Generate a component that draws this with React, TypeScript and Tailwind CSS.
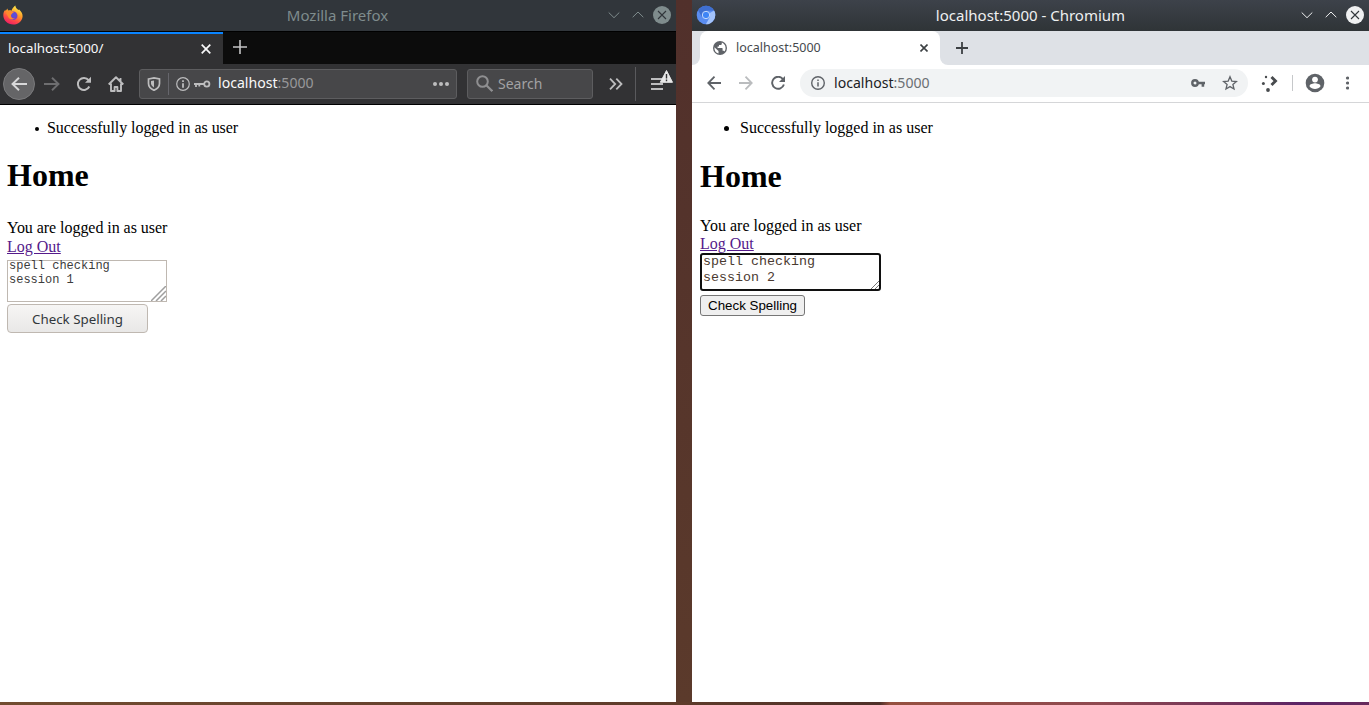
import React from "react";

type IconProps = { w: number; h: number; className?: string; children: React.ReactNode };

function Icon({ w, h, className = "", children }: IconProps) {
  return (
    <svg
      width={w}
      height={h}
      viewBox={`0 0 ${w} ${h}`}
      fill="none"
      stroke="currentColor"
      className={`block shrink-0 ${className}`}
    >
      {children}
    </svg>
  );
}

function FirefoxLogo() {
  return (
    <Icon w={20} h={20} className="-mt-[2px] ml-[3px]">
      <defs>
        <linearGradient id="fx" x1="0.75" y1="0.05" x2="0.3" y2="1">
          <stop offset="0" stopColor="#fff04a" />
          <stop offset="0.4" stopColor="#ff9a28" />
          <stop offset="0.7" stopColor="#ff4a45" />
          <stop offset="1" stopColor="#ed1a68" />
        </linearGradient>
      </defs>
      <path
        d="M4.4 3.6 5 5.6c1.4-.5 2.7-.3 3.5.1C9.200 3.500 10.800 1.500 12.300.5c.3 2.400 1.600 3.300 3 4.400l.8-.3c2 1.700 3.600 4.300 3.500 6.600-.2 4.700-4.400 8.400-9.400 8.400C4.700 19.600.3 15.400.3 10.300c0-2.400.8-4.300 2.100-5.500L2.600 6z"
        fill="url(#fx)"
        stroke="none"
      />
      <circle cx="10.200" cy="10.700" r="4.300" fill="#7542c8" stroke="none" />
      <path d="M3 8c2-2.200 4.300-2.200 6.300-1.500L11 7.800c-1 1.300-2.500 1-3 2.400-.2 2.200 1.500 3.700 4 3.100-1.800 2-6 1.200-7-1.800" fill="#ff8a2c" stroke="none" />
      <circle cx="11" cy="10.200" r="2.400" fill="#5b50d8" stroke="none" />
    </Icon>
  );
}

function ChromiumLogo() {
  return (
    <Icon w={20} h={20} className="-mt-px ml-1">
      <circle cx="10" cy="10" r="9.300" fill="#5a8df0" stroke="none" />
      <path d="M2 5.300A9.300 9.300 0 0 1 18.100 5.500L10 5.700 6 12z" fill="#3f6fd0" stroke="none" />
      <path d="M13 8.500 18.100 5.500A9.300 9.300 0 0 1 9.800 19.300l4-7z" fill="#a3c3fb" stroke="none" />
      <circle cx="10" cy="10" r="3.700" fill="#3f85f5" stroke="#c5dafc" strokeWidth="1" />
    </Icon>
  );
}

function WindowButtons({ disc, cross, line }: { disc: string; cross: string; line: string }) {
  return (
    <div className="-mt-px flex items-center gap-3">
      <Icon w={12} h={12} className={line}>
        <path d="m.7 3.500 5.300 5.200 5.300-5.200" />
      </Icon>
      <Icon w={12} h={12} className={line}>
        <path d="m.7 8.200 5.300-5.200 5.300 5.200" />
      </Icon>
      <Icon w={18} h={18} className="-ml-[3px]">
        <circle cx="9" cy="9" r="9" fill={disc} stroke="none" />
        <path d="m5 5 8 8M13 5l-8 8" stroke={cross} strokeWidth="1.100" />
      </Icon>
    </div>
  );
}

function FirefoxWindow() {
  return (
    <section className="flex h-[702px] w-[676px] flex-col overflow-hidden bg-white">
      <header className="flex h-[31px] shrink-0 items-center bg-[#31363b] pr-[5px]">
        <FirefoxLogo />
        <h2 className="-mt-[2px] flex-1 text-center font-['Noto_Sans',sans-serif] text-[15px] leading-5 text-[#7f8c8d]">
          <span className="ml-11">Mozilla Firefox</span>
        </h2>
        <WindowButtons disc="#7f8c8d" cross="#31363b" line="text-[#7f8c8d]" />
      </header>

      <div className="flex h-[33px] shrink-0 border-t border-black bg-[#0c0c0c]">
        <div className="flex w-[223px] items-center justify-between border-t-2 border-[#0a84ff] bg-[#323234] pr-3 pb-px pl-2 font-['Noto_Sans',sans-serif] text-[13.333px] text-[#f9f9fa]">
          <span>localhost:5000/</span>
          <Icon w={10} h={10}>
            <path d="m.7.7 8.600 8.600M9.300.7.7 9.300" strokeWidth="1.700" />
          </Icon>
        </div>
        <Icon w={14} h={14} className="mt-2 ml-[10px] text-[#c4c4c5]">
          <path d="M7 0v14M0 7h14" strokeWidth="1.600" />
        </Icon>
      </div>

      <div className="flex h-[41px] shrink-0 items-center border-b border-black bg-[#323234] text-[#bdbdbe]">
        <div className="ml-[3px] flex size-8 items-center justify-center rounded-full border border-[#7a7a7c] bg-[#656567] text-[#d8d8d9]">
          <Icon w={16} h={14}>
            <path d="M8 .8 1.500 7 8 13.200M1.500 7H16" strokeWidth="1.900" />
          </Icon>
        </div>
        <Icon w={16} h={14} className="ml-[9px] text-[#6e6e70]">
          <path d="M8 .8 14.500 7 8 13.200M14.500 7H0" strokeWidth="1.900" />
        </Icon>
        <Icon w={16} h={16} className="ml-4">
          <path d="M12.600 4.200A6 6 0 1 0 13.300 10.500" strokeWidth="2" />
          <path d="M15 .8v6H9z" fill="currentColor" stroke="none" />
        </Icon>
        <Icon w={16} h={16} className="ml-4">
          <path d="M.7 8.500 8 1.300l7.300 7.200M3 7.500V15h3.600v-4h2.800v4H13V7.500M12.500 2v3" strokeWidth="1.900" strokeLinejoin="round" />
        </Icon>

        <div className="ml-[15px] flex h-[30px] w-[318px] items-center rounded-[3px] border border-[#5d5d5f] bg-[#474749] font-['Noto_Sans',sans-serif] text-[14.100px]">
          <Icon w={14} h={14} className="ml-[7px]">
            <path d="M1.500 2 7 .9l5.500 1.100v4.500c0 3.500-2.500 5.500-5.500 6.800-3-1.300-5.500-3.300-5.500-6.800z" strokeWidth="1.700" />
            <path d="M7 3.400v7C5 9.200 4 8 4 6.200V4z" fill="currentColor" stroke="none" />
          </Icon>
          <div className="ml-[7px] h-[22px] w-px bg-[#66666c]" />
          <Icon w={14} h={14} className="ml-[7px]">
            <circle cx="7" cy="7" r="6.300" strokeWidth="1.200" />
            <path d="M7 6.200v4.500M7 3.200v1.700" strokeWidth="1.800" />
          </Icon>
          <Icon w={17} h={10} className="ml-[4px]">
            <circle cx="12.800" cy="5" r="2.600" strokeWidth="1.800" />
            <path d="M0 5h10M2 5v3M5.300 5v2.600" strokeWidth="1.800" />
          </Icon>
          <span className="-mt-[2px] ml-[7px] text-[#f9f9fa]">
            localhost<span className="text-[#98989a]">:5000</span>
          </span>
          <Icon w={16} h={4} className="mr-[7px] ml-auto">
            <g fill="currentColor" stroke="none">
              <circle cx="2" cy="2" r="2" />
              <circle cx="8" cy="2" r="2" />
              <circle cx="14" cy="2" r="2" />
            </g>
          </Icon>
        </div>

        <div className="ml-[10px] flex h-[30px] w-[126px] items-center rounded-[3px] border border-[#5d5d5f] bg-[#474749] font-['Noto_Sans',sans-serif] text-[14px] text-[#a2a2a4]">
          <Icon w={17} h={17} className="-mt-px ml-2 text-[#8f8f91]">
            <circle cx="6.500" cy="6.500" r="5.300" strokeWidth="2" />
            <path d="m10.300 10.300 6 5.800" strokeWidth="2.200" />
          </Icon>
          <span className="-mt-[2px] ml-[5px]">Search</span>
        </div>

        <Icon w={14} h={12} className="ml-4">
          <path d="m1 .7 5.200 5.300L1 11.300M7.300.7 12.500 6l-5.200 5.300" strokeWidth="1.800" />
        </Icon>
        <div className="ml-[12px] h-[34px] w-px bg-[#5a5a5d]" />
        <Icon w={24} h={26} className="-mt-1 ml-[15px]">
          <path d="M0 10h12M0 15h12M0 20h12" strokeWidth="1.800" />
          <path d="M15.500 1.500 21.500 13.300H9.300z" fill="#e8e8e8" stroke="#e8e8e8" strokeWidth="1" strokeLinejoin="round" />
          <path d="M15.500 5v4.500M15.500 10.600v1.600" stroke="#323234" strokeWidth="1.400" />
        </Icon>
      </div>

      <main className="flex flex-col items-start pl-[7px] font-['Liberation_Serif',serif] text-[16px] leading-[19px] text-black">
        <div className="mt-[13px] flex items-center">
          <i className="mt-[3px] ml-[28px] block size-1 rounded-full bg-black" />
          <span className="ml-2 tracking-[-0.060px]">Successfully logged in as user</span>
        </div>
        <h1 className="mt-[20px] text-[32px] leading-[37px] font-bold">Home</h1>
        <p className="mt-[24px] tracking-[-0.050px]">You are logged in as user</p>
        <a className="text-[#551a8b] underline">Log Out</a>
        <div className="relative mt-[4px] h-[42px] w-40 border border-[#bfb8b1] bg-white pl-[1px] font-['Liberation_Mono',monospace] text-[12px] leading-[14px] whitespace-pre text-[#3c3c3c]">
          <div className="-mt-[2px]">{"spell checking\nsession 1"}</div>
          <svg width="15" height="15" className="absolute right-0 bottom-0" stroke="#9f9f9f" strokeWidth="1.500">
            <path d="M0 15 15 0M5 15 15 5M10 15l5-5" />
          </svg>
        </div>
        <button className="mt-[2px] h-[29px] w-[141px] rounded-[4px] border border-[#bfb8b1] bg-linear-to-b from-[#f6f5f4] to-[#e9e8e7] pt-px font-['Noto_Sans',sans-serif] text-[13.333px] text-[#32373b]">
          Check Spelling
        </button>
      </main>
    </section>
  );
}

function ChromiumWindow() {
  return (
    <section className="flex h-[702px] w-[677px] flex-col overflow-hidden bg-white">
      <header className="flex h-[31px] shrink-0 items-center bg-linear-to-b from-[#3d424a] to-[#2f3437] pr-[5px]">
        <ChromiumLogo />
        <h2 className="-mt-[2px] flex-1 text-center font-['Noto_Sans',sans-serif] text-[15px] leading-5 text-[#eff0f1]">
          <span className="ml-11">localhost:5000 - Chromium</span>
        </h2>
        <WindowButtons disc="#eff0f1" cross="#31363b" line="text-[#eff0f1]" />
      </header>

      <div className="flex h-[34px] shrink-0 bg-[#dee1e6]">
        <div className="flex w-2 bg-white">
          <div className="w-2 rounded-br-[8px] bg-[#dee1e6]" />
        </div>
        <div className="flex w-[240px] items-center rounded-t-[8px] bg-white pl-[13px] font-['Noto_Sans',sans-serif] text-[12.500px] text-[#45494d]">
          <Icon w={14} h={14} className="text-[#5f6368]">
            <circle cx="7" cy="7" r="7" fill="currentColor" stroke="none" />
            <path d="M1.400 6.200 5.500 10v2.600C2.800 12 1.200 9.500 1.400 6.200zM8.800 1.500v1.300c0 .8-.6 1.300-1.400 1.300H6v1.400H4.600V7h4.200c.6 0 .8.400.8.800v2h1.200l.8.600c1.900-2.500 1.200-7.400-2.800-8.900z" fill="#fff" stroke="none" />
          </Icon>
          <span className="ml-[9px]">localhost:5000</span>
          <Icon w={8} h={8} className="mr-3 ml-auto text-[#3c4043]">
            <path d="m.5.5 7 7M7.500.5l-7 7" strokeWidth="1.600" />
          </Icon>
        </div>
        <div className="w-2 bg-white">
          <div className="h-full rounded-bl-[8px] bg-[#dee1e6]" />
        </div>
        <Icon w={12} h={12} className="mt-[11px] ml-2 text-[#3c4043]">
          <path d="M6 0v12M0 6h12" strokeWidth="1.800" />
        </Icon>
      </div>

      <div className="flex h-[38px] shrink-0 items-center border-b border-[#d5d6d8] bg-white pb-px text-[#5f6368]">
        <Icon w={14} h={14} className="ml-[15px]">
          <path d="M7.500.7 1.300 7l6.200 6.300M1.300 7H14" strokeWidth="1.800" />
        </Icon>
        <Icon w={14} h={14} className="ml-[18px] text-[#babcbe]">
          <path d="M6.500.7 12.700 7l-6.200 6.300M12.700 7H0" strokeWidth="1.800" />
        </Icon>
        <Icon w={14} h={14} className="ml-[18px]">
          <path d="M12 3.200A6 6 0 1 0 12.900 8.500" strokeWidth="1.900" />
          <path d="M14 0v6H8z" fill="currentColor" stroke="none" />
        </Icon>
        <div className="ml-[15px] flex h-7 w-[448px] items-center rounded-full bg-[#f1f3f4] font-['Noto_Sans',sans-serif] text-[14.100px]">
          <Icon w={14} h={14} className="ml-[11px]">
            <circle cx="7" cy="7" r="6.300" strokeWidth="1.400" />
            <path d="M7 6.200v4.300M7 3.500V5" strokeWidth="1.500" />
          </Icon>
          <span className="-mt-px ml-[9px] text-[#202124]">
            localhost<span className="text-[#6b6f73]">:5000</span>
          </span>
          <Icon w={14} h={8} className="ml-auto">
            <circle cx="4" cy="4" r="2.700" strokeWidth="2.400" />
            <path d="M6.500 4H14M11.900 4v3.700" strokeWidth="2.600" />
          </Icon>
          <Icon w={16} h={16} className="mr-[10px] ml-[17px]">
            <path d="m8 1.800 1.800 4.300 4.600.4-3.500 3 1.100 4.500-4-2.400L4 14l1.100-4.500-3.500-3 4.600-.4z" strokeWidth="1.300" />
          </Icon>
        </div>
        <Icon w={17} h={17} className="ml-[13px] text-[#484b4e]">
          <g fill="currentColor" stroke="none">
            <circle cx="5" cy="2" r="1.200" />
            <circle cx="2.400" cy="8.500" r="1.500" />
            <circle cx="7" cy="15" r="1.900" />
          </g>
          <path d="m10.500 2 4 4-4 4" strokeWidth="2.900" />
        </Icon>
        <div className="ml-[14px] h-4 w-px bg-[#c6c8ca]" />
        <Icon w={20} h={20} className="ml-[12px]">
          <circle cx="10" cy="10" r="9.300" fill="currentColor" stroke="none" />
          <circle cx="10" cy="6.600" r="2.900" fill="#fff" stroke="none" />
          <path d="M4.500 13.200c0-2 3.700-2.900 5.500-2.900s5.500.9 5.500 2.900C14.200 15 12.300 16 10 16s-4.200-1-5.500-2.800z" fill="#fff" stroke="none" />
        </Icon>
        <Icon w={4} h={14} className="ml-[20px]">
          <g fill="currentColor" stroke="none">
            <circle cx="2.500" cy="2" r="1.600" />
            <circle cx="2.500" cy="7" r="1.600" />
            <circle cx="2.500" cy="12" r="1.600" />
          </g>
        </Icon>
      </div>

      <main className="flex flex-col items-start pl-2 font-['Liberation_Serif',serif] text-[16px] leading-[18px] text-black">
        <div className="mt-4 flex items-center">
          <i className="mt-[1px] ml-6 block size-[5px] rounded-full bg-black" />
          <span className="ml-[11px]">Successfully logged in as user</span>
        </div>
        <h1 className="mt-[21px] text-[32px] leading-[37px] font-bold">Home</h1>
        <p className="mt-[22px]">You are logged in as user</p>
        <a className="text-[#551a8b] underline">Log Out</a>
        <div className="relative h-[38px] w-[181px] rounded-[3px] border-2 border-[#101010] bg-white pl-[1px] font-['Liberation_Mono',monospace] text-[13.333px] leading-4 whitespace-pre text-[#4a3a30]">
          <div className="-mt-px">{"spell checking\nsession 2"}</div>
          <svg width="9" height="9" className="absolute right-0 bottom-0" stroke="#777" strokeWidth="1">
            <path d="M1 9 9 1M5 9l4-4" />
          </svg>
        </div>
        <button className="mt-1 h-[21px] w-[105px] rounded-[3px] border border-[#767676] bg-[#efefef] font-['Liberation_Sans',sans-serif] text-[13.333px] leading-[15px] whitespace-nowrap text-black">
          Check Spelling
        </button>
      </main>
    </section>
  );
}

export default function App() {
  return (
    <div className="h-[705px] w-[1369px] overflow-hidden bg-[#54342a]">
      <div className="flex h-[702px] gap-4 bg-linear-to-b from-[#51302b] to-[#5b3a2b]">
        <FirefoxWindow />
        <ChromiumWindow />
      </div>
      <div className="h-[3px] bg-[linear-gradient(90deg,#724c30_0px,#6a442f_300px,#5e3b2a_676px,#4f3029_880px,#96503f_890px,#8f4950_1100px,#6d2f5c_1250px,#5b2467_1300px,#672a5c_1369px)]" />
    </div>
  );
}
